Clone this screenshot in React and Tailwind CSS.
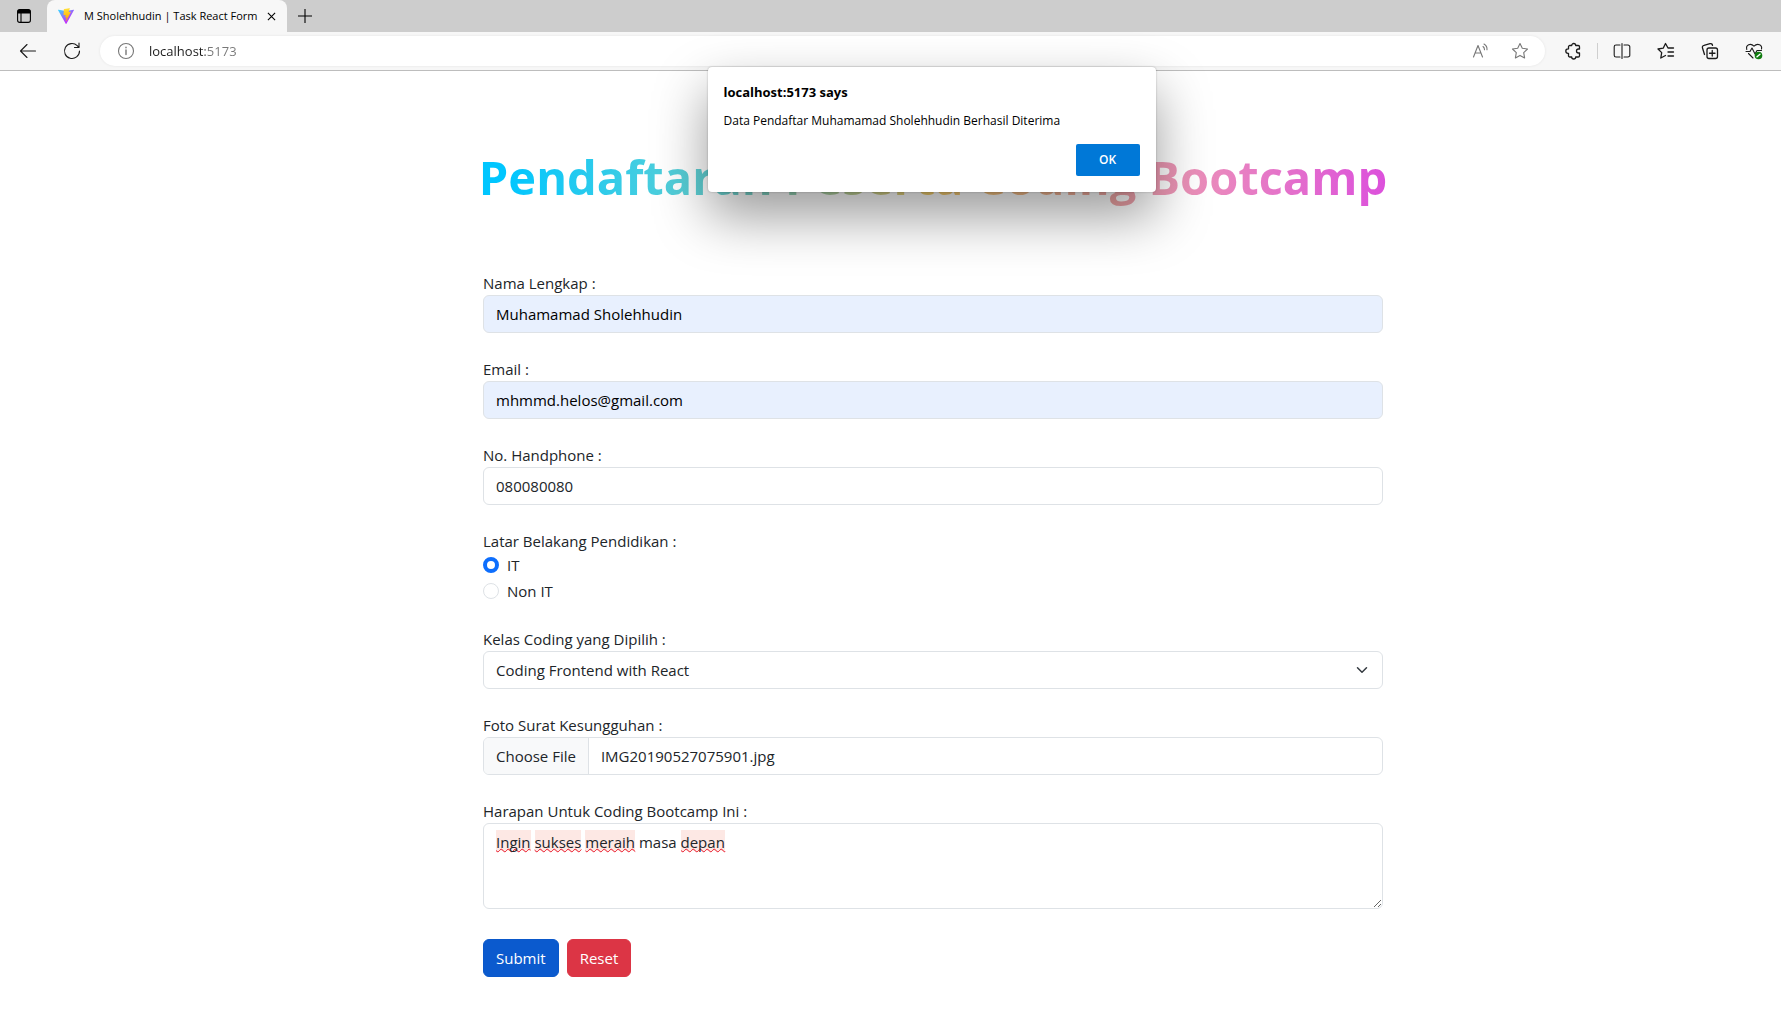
import { useEffect, useRef } from "react";

const box =
  "block w-full rounded-md border border-[#dee2e6] text-[15px] leading-6 text-[#212529] outline-none";

function Field({ id, label, children }) {
  return (
    <div className="mb-6">
      <label htmlFor={id} className="block">
        {label}
      </label>
      {children}
    </div>
  );
}

function Radio({ id, label, defaultChecked }) {
  return (
    <div className="flex h-6 items-center gap-2">
      <input
        id={id}
        type="radio"
        name="pendidikan"
        defaultChecked={defaultChecked}
        className="size-4 appearance-none rounded-full border border-[#dee2e6] bg-white checked:border-4 checked:border-[#0d6efd]"
      />
      <label htmlFor={id}>{label}</label>
    </div>
  );
}

function IconButton({ label, children }) {
  return (
    <button type="button" aria-label={label} className="flex size-5 shrink-0 items-center justify-center">
      <svg
        viewBox="0 0 20 20"
        className="size-5"
        fill="none"
        stroke="currentColor"
        strokeWidth="1.1"
        strokeLinecap="round"
        strokeLinejoin="round"
        aria-hidden="true"
      >
        {children}
      </svg>
    </button>
  );
}

function ViteLogo() {
  return (
    <svg viewBox="0 0 256 257" className="size-4 shrink-0" aria-hidden="true">
      <defs>
        <linearGradient id="viteBody" x1="-.8%" x2="57.6%" y1="7.7%" y2="78.4%">
          <stop offset="0%" stopColor="#41D1FF" />
          <stop offset="100%" stopColor="#BD34FE" />
        </linearGradient>
        <linearGradient id="viteBolt" x1="43.4%" x2="50.3%" y1="2.2%" y2="89%">
          <stop offset="0%" stopColor="#FFEA83" />
          <stop offset="8.3%" stopColor="#FFDD35" />
          <stop offset="100%" stopColor="#FFA800" />
        </linearGradient>
      </defs>
      <path
        fill="url(#viteBody)"
        d="M255.153 37.938L134.897 252.976c-2.483 4.44-8.862 4.466-11.382.048L.875 37.958c-2.746-4.814 1.371-10.646 6.827-9.67l120.385 21.517a6.537 6.537 0 0 0 2.322-.004l117.867-21.483c5.438-.991 9.574 4.796 6.877 9.62Z"
      />
      <path
        fill="url(#viteBolt)"
        d="M185.432.063L96.44 17.501a3.268 3.268 0 0 0-2.634 3.014l-5.474 92.456a3.268 3.268 0 0 0 3.997 3.378l24.777-5.718c2.318-.535 4.413 1.507 3.936 3.838l-7.361 36.047c-.495 2.426 1.782 4.5 4.151 3.78l15.304-4.649c2.372-.72 4.652 1.36 4.15 3.788l-11.698 56.621c-.732 3.542 3.979 5.473 5.943 2.437l1.313-2.028l72.516-144.72c1.215-2.423-.88-5.186-3.54-4.672l-25.505 4.922c-2.396.462-4.435-1.77-3.759-4.114l16.646-57.705c.677-2.35-1.37-4.583-3.769-4.113Z"
      />
    </svg>
  );
}

function TabBar() {
  return (
    <div className="flex h-8 items-stretch bg-[#cdcdcd] text-black">
      <div className="flex w-[47px] items-center justify-center">
        <button type="button" aria-label="Tab actions" className="flex items-center">
          <svg viewBox="0 0 16 16" className="size-4" aria-hidden="true">
            <rect x="1.6" y="1.6" width="12.8" height="12.8" rx="2.2" fill="none" stroke="currentColor" strokeWidth="1.1" />
            <path d="M1.5 5.5V3.5a2 2 0 0 1 2-2h9a2 2 0 0 1 2 2v2z" fill="currentColor" />
            <path d="M5 5v9" stroke="currentColor" strokeWidth="1.1" />
          </svg>
        </button>
      </div>
      <div className="flex w-60 items-center rounded-t-lg bg-[#f7f7f7] pl-[11px] pr-2">
        <ViteLogo />
        <span className="ml-[10px] flex-1 whitespace-nowrap text-[11px]">M Sholehhudin | Task React Form</span>
        <button type="button" aria-label="Close tab" className="flex size-4 items-center justify-center">
          <svg viewBox="0 0 10 10" className="size-[9px]" stroke="currentColor" strokeWidth="1.2" aria-hidden="true">
            <path d="M1 1l8 8M9 1l-8 8" />
          </svg>
        </button>
      </div>
      <button type="button" aria-label="New tab" className="flex w-9 items-center justify-center">
        <svg viewBox="0 0 14 14" className="size-[14px]" stroke="currentColor" strokeWidth="1.1" aria-hidden="true">
          <path d="M7 0v14M0 7h14" />
        </svg>
      </button>
    </div>
  );
}

function Toolbar() {
  return (
    <div className="flex h-[39px] items-center border-b border-[#bdbdbd] bg-[#f7f7f7] pl-[18px] pr-[17px] text-[#1b1b1b]">
      <IconButton label="Back">
        <path d="M17.500 10H2.500M9 3.500L2.500 10L9 16.500" />
      </IconButton>
      <div className="ml-6 flex">
        <IconButton label="Refresh">
          <path d="M17.500 10a7.500 7.500 0 1 1-2.300-5.400L17 6.500M17 2v4.500h-4.500" />
        </IconButton>
      </div>
      <div className="ml-[18px] flex h-[30px] flex-1 items-center rounded-full bg-white pl-4 pr-[15px] text-[#777] shadow-[0_0_3px_rgba(0,0,0,0.08)]">
        <IconButton label="Site information">
          <circle cx="10" cy="10" r="7.500" />
          <path d="M10 9v4.500M10 6.300v.4" strokeWidth="1.400" />
        </IconButton>
        <input
          type="text"
          aria-label="Address"
          defaultValue="localhost:5173"
          className="ml-[13px] min-w-0 flex-1 bg-linear-to-r from-[#1b1b1b] from-[56px] to-[#777] to-[56px] bg-clip-text text-[13px] leading-5 text-transparent outline-none"
        />
        <IconButton label="Read aloud">
          <path d="M3.500 16L8 4.500L12.500 16M5.100 12h5.800M13 5.500a4 4 0 0 1 1.500 3.200M14 3a6 6 0 0 1 3 5.700" />
        </IconButton>
        <div className="ml-5 flex">
          <IconButton label="Add to favorites">
            <path d="M10 2.500l2.300 4.800 5.200.7-3.800 3.700.9 5.200L10 14.400l-4.600 2.500.9-5.200L2.500 8l5.200-.7z" />
          </IconButton>
        </div>
      </div>
      <div className="ml-[18px] flex items-center">
        <IconButton label="Extensions">
          <path d="M6.800 4.500H8.700a2 2 0 0 1 4 0h2.500a1.300 1.300 0 0 1 1.300 1.300V8h-1a2 2 0 0 0 0 4h1v2.700a1.300 1.300 0 0 1-1.300 1.300h-2.500a2 2 0 0 1-4 0H6.800a1.300 1.300 0 0 1-1.300-1.300V12.300H5a2.200 2.200 0 0 1 0-4.400h.5V5.800a1.300 1.300 0 0 1 1.300-1.300z" strokeWidth="1.300" />
        </IconButton>
        <span className="ml-[14px] h-4 w-px bg-[#cfcfcf]" />
        <div className="ml-[14px] flex gap-6">
          <IconButton label="Split screen">
            <path d="M8 4H4a1.800 1.800 0 0 0-1.800 1.800v8.400A1.800 1.800 0 0 0 4 16h4M12 4h4a1.800 1.800 0 0 1 1.800 1.800v8.400A1.800 1.800 0 0 1 16 16h-4M10 2.500v15" />
          </IconButton>
          <IconButton label="Favorites">
            <path d="M17.500 7H12L9.500 2.500L7.200 7.200L2 8l3.700 3.600L4.800 17l4.700-2.500M12 11h5.500M12 15h5.500" strokeWidth="1.300" />
          </IconButton>
          <IconButton label="Collections">
            <rect x="7" y="7" width="10.500" height="10.500" rx="2" strokeWidth="1.300" />
            <path d="M12.250 9.500v5.500M9.500 12.250h5.500M4.500 13.500L2.500 7A2 2 0 0 1 4 4.300L10 2.600A2 2 0 0 1 12.500 4.300" strokeWidth="1.300" />
          </IconButton>
          <IconButton label="Browser essentials">
            <path d="M2.800 8.500C1.500 4 6.500 1.500 10 5.200C13.500 1.500 18.500 4 17.500 8M2 10.500h4l2-3.500 3 6 2-3.500h4.500M4.500 12.500L9 17" />
            <circle cx="14.500" cy="14.500" r="3.800" fill="#107c10" stroke="none" />
            <path d="M13 15.800l3-2.600" stroke="#fff" strokeWidth="1.400" />
          </IconButton>
        </div>
      </div>
    </div>
  );
}

function AlertDialog() {
  return (
    <div
      role="alertdialog"
      aria-labelledby="alert-title"
      aria-describedby="alert-text"
      className="absolute left-1/2 top-[67px] flex w-[448px] -translate-x-[183px] flex-col rounded-[4px] bg-white px-4 pb-4 pt-[15px] text-xs text-black shadow-[0_0_2px_rgba(0,0,0,0.3),0_24px_54px_rgba(0,0,0,0.4)]"
    >
      <h2 id="alert-title" className="text-[13px] font-bold leading-5">
        localhost:5173 says
      </h2>
      <p id="alert-text" className="mt-[9px] leading-5">
        Data Pendaftar Muhamamad Sholehhudin Berhasil Diterima
      </p>
      <button
        type="button"
        className="mt-[13px] h-8 w-16 self-end rounded-[2px] bg-[#0078d7] font-semibold text-white"
      >
        OK
      </button>
    </div>
  );
}

const words = [
  ["Ingin", true],
  ["sukses", true],
  ["meraih", true],
  ["masa", false],
  ["depan", true],
];

export default function App() {
  const fileRef = useRef(null);

  useEffect(() => {
    const data = new DataTransfer();
    data.items.add(new File([""], "IMG20190527075901.jpg", { type: "image/jpeg" }));
    fileRef.current.files = data.files;
  }, []);

  return (
    <div className="relative min-h-screen bg-white font-['Open_Sans','Noto_Sans',sans-serif] text-[15px] leading-6 text-[#212529]">
      <TabBar />
      <Toolbar />
      <main className="flex justify-center pb-11 pl-[85px]">
        <div className="w-full max-w-[900px]">
          <h1 className="-mx-4 mb-[62px] mt-[75px] whitespace-nowrap text-center text-[47px] font-bold leading-[63px]">
            <span className="bg-[linear-gradient(90deg,#00c6ff_3%,#78d3c9_30%,#f6cf6c_50%,#ee9ab4_75%,#dc50dc_100%)] bg-clip-text text-transparent">
              Pendaftaran Peserta Coding Bootcamp
            </span>
          </h1>
          <form onSubmit={(e) => e.preventDefault()}>
            <Field id="nama" label="Nama Lengkap :">
              <input id="nama" type="text" defaultValue="Muhamamad Sholehhudin" className={`${box} bg-[#e8f0fe] px-3 py-1.5 text-black`} />
            </Field>
            <Field id="email" label="Email :">
              <input id="email" type="email" defaultValue="mhmmd.helos@gmail.com" className={`${box} bg-[#e8f0fe] px-3 py-1.5 text-black`} />
            </Field>
            <Field id="hp" label="No. Handphone :">
              <input id="hp" type="tel" defaultValue="080080080" className={`${box} px-3 py-1.5`} />
            </Field>
            <fieldset className="mb-6">
              <legend className="block">Latar Belakang Pendidikan :</legend>
              <div className="flex flex-col gap-0.5">
                <Radio id="it" label="IT" defaultChecked />
                <Radio id="non-it" label="Non IT" />
              </div>
            </fieldset>
            <Field id="kelas" label="Kelas Coding yang Dipilih :">
              <div className="grid items-center">
                <select id="kelas" className={`${box} col-start-1 row-start-1 appearance-none bg-white px-3 py-1.5`}>
                  <option>Coding Frontend with React</option>
                </select>
                <svg
                  viewBox="0 0 16 16"
                  className="pointer-events-none col-start-1 row-start-1 mr-[13px] h-3 w-4 justify-self-end"
                  fill="none"
                  stroke="#343a40"
                  strokeWidth="2"
                  strokeLinecap="round"
                  strokeLinejoin="round"
                  aria-hidden="true"
                >
                  <path d="m2 5 6 6 6-6" />
                </svg>
              </div>
            </Field>
            <Field id="foto" label="Foto Surat Kesungguhan :">
              <input
                id="foto"
                ref={fileRef}
                type="file"
                className={`${box} overflow-hidden file:mr-3 file:h-9 file:rounded-none file:border-0 file:border-r file:border-solid file:border-[#dee2e6] file:bg-[#f8f9fa] file:px-3 file:text-[#212529]`}
              />
            </Field>
            <div className="mb-[30px]">
              <label htmlFor="harapan" className="block">
                Harapan Untuk Coding Bootcamp Ini :
              </label>
              <div className="grid">
                <div aria-hidden="true" className="col-start-1 row-start-1 flex items-start gap-1 border border-transparent px-3 py-1.5 text-transparent">
                  {words.map(([word, marked]) => (
                    <span
                      key={word}
                      className={
                        marked
                          ? "bg-[#fde8e4] leading-[21px] underline decoration-[#e81123] decoration-wavy decoration-1 underline-offset-2 [text-decoration-skip-ink:none]"
                          : ""
                      }
                    >
                      {word}
                    </span>
                  ))}
                </div>
                <textarea
                  id="harapan"
                  rows={3}
                  spellCheck={false}
                  defaultValue="Ingin sukses meraih masa depan"
                  className={`${box} col-start-1 row-start-1 resize-y bg-transparent px-3 py-1.5`}
                />
              </div>
            </div>
            <div className="flex gap-2">
              <button type="submit" className="rounded-md border border-[#0a58ca] bg-[#0b5ace] px-3 py-1.5 text-white">
                Submit
              </button>
              <button type="reset" className="rounded-md border border-[#dc3545] bg-[#dc3545] px-3 py-1.5 text-white">
                Reset
              </button>
            </div>
          </form>
        </div>
      </main>
      <AlertDialog />
    </div>
  );
}
